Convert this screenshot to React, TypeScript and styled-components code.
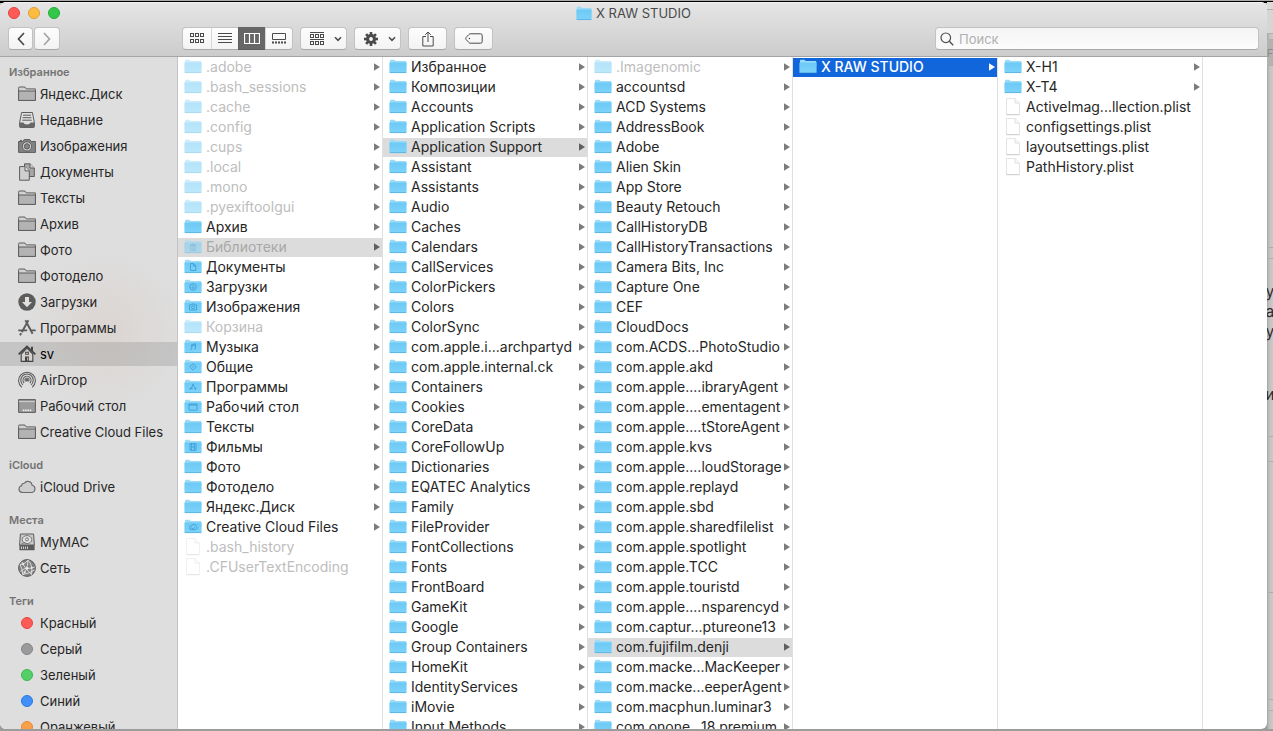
import React from "react";
import styled, { createGlobalStyle, css } from "styled-components";

const GlobalStyle = createGlobalStyle`
  * { box-sizing: border-box; }
  body {
    margin: 0;
    background: #b4b4b4;
    font-family: Inter, "Liberation Sans", sans-serif;
    color: #262626;
  }
  button { font: inherit; color: inherit; }
  ul { list-style: none; margin: 0; padding: 0; }
`;

/* ---------- desktop and window frame ---------- */

const Desktop = styled.div`
  display: flex;
  height: 100vh;
  padding: 1px 0 2px;
  overflow: hidden;
  border-top: 1px solid #a9aca9;
  background: linear-gradient(#000 0 2px, #c6c6c6 2px 60%, #9c9c9c);
`;

const Window = styled.main`
  flex: 1;
  min-width: 0;
  display: flex;
  flex-direction: column;
  overflow: hidden;
  border-radius: 6px;
  background: #fff;
`;

const Backdrop = styled.aside`
  flex: none;
  width: 6px;
  overflow: hidden;
  background: linear-gradient(90deg, #a4a4a4, #c0c0c0 2px, #cbcbcb);
`;

const Pane = styled.div<{ $h: number; $bg?: string; $pad?: number }>`
  height: ${(p) => p.$h}px;
  padding-top: ${(p) => p.$pad ?? 0}px;
  overflow: hidden;
  border-bottom: 1px solid #aeaeae;
  background: ${(p) => p.$bg ?? "none"};
`;

const Fragment = styled.div<{ $gap?: number; $faint?: boolean }>`
  display: flex;
  justify-content: center;
  margin-top: ${(p) => p.$gap ?? 0}px;
  font-size: ${(p) => (p.$faint ? 11 : 15)}px;
  line-height: 20px;
  color: ${(p) => (p.$faint ? "#8a8a8a" : "#2b2b2b")};
`;

/* ---------- toolbar ---------- */

const TitleArea = styled.header`
  flex: none;
  padding-bottom: 6px;
  border-bottom: 1px solid #a5a5a5;
  background: linear-gradient(#f2f2f2 0 1px, #e5e5e5 1px, #cccccc);
`;

const TitleRow = styled.div`
  display: grid;
  grid-template-columns: 1fr auto 1fr;
  align-items: center;
  height: 22px;
  margin-bottom: 3px;
  padding: 0 8px;
`;

const Lights = styled.div`
  display: flex;
  gap: 8px;
`;

const Light = styled.button<{ $fill: string; $edge: string }>`
  width: 12px;
  height: 12px;
  padding: 0;
  border: 1px solid ${(p) => p.$edge};
  border-radius: 50%;
  background: ${(p) => p.$fill};
`;

const Title = styled.h1`
  display: flex;
  align-items: center;
  gap: 4px;
  margin: 0;
  font-size: 13px;
  font-weight: 400;
  line-height: 20px;
  color: #4a4a4a;
`;

const Tools = styled.div`
  display: flex;
  gap: 7px;
  padding: 0 8px;
`;

const NavGroup = styled.nav`
  display: flex;
  gap: 1px;
  width: 167px;
`;

const ToolButton = styled.button<{ $w: number; $dim?: boolean; $menu?: boolean }>`
  display: flex;
  align-items: center;
  justify-content: center;
  gap: 10px;
  width: ${(p) => p.$w}px;
  height: 23px;
  padding: 0 0 0 ${(p) => (p.$menu ? 4 : 0)}px;
  border: 1px solid #c2c2c2;
  border-bottom-color: #a9a9a9;
  border-radius: 4px;
  background: linear-gradient(#fdfdfd, #f3f3f3);
  color: ${(p) => (p.$dim ? "#a5a5a5" : "#4a4a4a")};
`;

const Segments = styled.div`
  display: flex;
  height: 23px;
  border: 1px solid #c2c2c2;
  border-bottom-color: #a9a9a9;
  border-radius: 4px;
  background: linear-gradient(#fdfdfd, #f3f3f3);
`;

const Segment = styled.button<{ $on?: boolean }>`
  display: flex;
  align-items: center;
  justify-content: center;
  width: 27px;
  height: 21px;
  padding: 0;
  border: 0;
  background: none;
  color: #4a4a4a;
  &:first-child { width: 28px; }
  & + & { border-left: 1px solid #d6d6d6; }
  ${(p) =>
    p.$on &&
    css`
      background: #666;
      color: #fff;
      && { border-left-color: #5c5c5c; }
      box-shadow: 0 -1px #666, 0 1px #5c5c5c;
    `}
`;

const Search = styled.label`
  display: flex;
  align-items: center;
  gap: 5px;
  width: 324px;
  height: 23px;
  margin-left: auto;
  padding: 0 4px;
  border: 1px solid #c2c2c2;
  border-bottom-color: #a9a9a9;
  border-radius: 4px;
  background: linear-gradient(#f4f4f4, #fcfcfc);
  color: #4d4d4d;
`;

const SearchInput = styled.input`
  flex: 1;
  min-width: 0;
  padding: 0;
  border: 0;
  outline: 0;
  background: none;
  font: 13px/20px Inter, "Liberation Sans", sans-serif;
  &::placeholder { color: #b0b0b0; opacity: 1; }
`;

/* ---------- sidebar ---------- */

const Body = styled.div`
  flex: 1;
  min-height: 0;
  display: flex;
`;

const Sidebar = styled.nav`
  flex: none;
  width: 178px;
  padding-top: 5px;
  overflow: hidden;
  border-right: 1px solid #c3c3c3;
  background:
    radial-gradient(circle at 105px 275px, rgba(205, 170, 150, 0.18), rgba(205, 170, 150, 0) 80px),
    #dedede;
`;

const Group = styled.section`
  padding-bottom: 9px;
`;

const GroupTitle = styled.h2`
  margin: 0;
  padding-left: 9px;
  font-size: 11px;
  font-weight: 600;
  line-height: 20px;
  color: #737373;
`;

const Place = styled.a<{ $on?: boolean }>`
  display: flex;
  align-items: center;
  gap: 4px;
  height: 24px;
  margin-bottom: 2px;
  padding-left: 18px;
  font-size: 13px;
  line-height: 24px;
  white-space: nowrap;
  text-decoration: none;
  color: #262626;
  ${(p) => p.$on && css`background: rgba(110, 110, 110, 0.22); color: #000;`}
`;

const TagDot = styled.span<{ $fill: string; $edge: string }>`
  width: 12px;
  height: 12px;
  margin: 0 3px;
  border: 1px solid ${(p) => p.$edge};
  border-radius: 50%;
  background: ${(p) => p.$fill};
`;

/* ---------- columns ---------- */

const Column = styled.ul`
  flex: none;
  width: 205px;
  padding-top: 1px;
  overflow: hidden;
  border-right: 1px solid #e0e0e0;
`;

const Row = styled.button<{ $dim?: boolean; $on?: "grey" | "blue" }>`
  display: flex;
  align-items: center;
  gap: 4px;
  width: 100%;
  height: 19px;
  padding: 0 2px 2px 6px;
  border: 0;
  background: ${(p) => (p.$on === "blue" ? "#1166dc" : p.$on ? "#dcdcdc" : "none")};
  color: ${(p) => (p.$on === "blue" ? "#fff" : p.$dim ? (p.$on ? "#a8a8a8" : "#bdbdbd") : "#262626")};
  font-size: 14px;
  font-weight: ${(p) => (p.$on === "blue" ? 500 : 400)};
  line-height: 17px;
  text-align: left;
  white-space: nowrap;
`;

const RowItem = styled.li`
  height: 20px;
`;

const Name = styled.span`
  flex: 1;
  min-width: 0;
`;

const Faded = styled.span<{ $dim?: boolean }>`
  display: flex;
  flex: none;
  opacity: ${(p) => (p.$dim ? 0.5 : 1)};
`;

/* ---------- drawings ---------- */

const glyphs: Record<string, React.ReactNode> = {
  library: <path d="M6 7.5 9 5.8l3 1.7zM6.7 8.3v3.4M9 8.3v3.4M11.3 8.3v3.4M5.8 12.2h6.4" />,
  doc: <path d="M6.5 5.5h3l2.3 2.3v4.7H6.5zM9.3 5.7v2.3h2.4" />,
  down: <><circle cx="9" cy="9" r="3.3" /><path d="M9 7.2v3.2M7.5 9.2 9 10.7l1.5-1.5" /></>,
  camera: <><path d="M5.5 7h1.8l.7-1h2l.7 1h1.8v5h-7z" /><circle cx="9" cy="9.4" r="1.5" /></>,
  music: <path d="M7.7 11.3V6.6l3.8-.8v4.8M7.7 8l3.8-.8M6.3 11.5h1.2M10.1 10.8h1.2" />,
  shared: <path d="M9 5.7 12.2 9 9 12.2 5.8 9zM9 8.2v1.6" />,
  apps: <path d="M9.5 5.8 6.3 12M8.5 5.8l3.2 6.2M5.5 10.3h3.4M10.8 10.3h1.8" />,
  desk: <path d="M5 6h8v6.2H5zM5 7h8" />,
  film: <path d="M6 5.7h6v6.6H6zM7.6 5.7v6.6M10.4 5.7v6.6M7.6 9h2.8" />,
  cloud: <path d="M7.3 11.7a2 2 0 1 1 .4-4 2.6 2.6 0 0 1 4.8.9 1.8 1.8 0 0 1-1 3.1zM7 9.6l2.2 1.5 1.6-2" />,
};

function Folder({ glyph, width = 18 }: { glyph?: string; width?: number }) {
  return (
    <svg width={width} height="17" viewBox="0 0 18 17" preserveAspectRatio="none" aria-hidden="true">
      <defs>
        <linearGradient id="folder-front" x1="0" y1="0" x2="0" y2="1">
          <stop offset="0" stopColor="#6cc9f5" />
          <stop offset="1" stopColor="#7dd3fa" />
        </linearGradient>
      </defs>
      <path d="M1 2.8Q1 1.8 2 1.8H5.4L6.6 3.1H16.6Q17.3 3.1 17.3 4V8H1z" fill="#9adcf8" />
      <path d="M.4 4.6H17.6V14Q17.6 15 16.6 15H1.4Q.4 15 .4 14z" fill="url(#folder-front)" />
      <path d="M.8 14.6H17.2" stroke="#56addb" strokeWidth="0.8" />
      {glyph && (
        <g fill="none" stroke="#3497cf" strokeWidth="1" opacity="0.75">
          {glyphs[glyph]}
        </g>
      )}
    </svg>
  );
}

function File() {
  return (
    <svg width="18" height="19" viewBox="0 0 18 19" aria-hidden="true">
      <path d="M2.5 1.5H11L15.5 6V17.5H2.5z" fill="#fff" stroke="#e4e4e4" />
      <path d="M11 1.5V6H15.5" fill="#f8f8f8" stroke="#dfdfdf" />
      <path d="M2.5 17.7H15.5" stroke="#cdcdcd" />
    </svg>
  );
}

function Arrow({ color }: { color: string }) {
  return (
    <svg width="6" height="8" viewBox="0 0 6 8" aria-hidden="true">
      <path d="M0 .3 6 4 0 7.7z" fill={color} />
    </svg>
  );
}

const SIDE = "#5c5c5c";

const sideIcons: Record<string, React.ReactNode> = {
  folder: (
    <>
      <path d="M.6 3.4V15.4H17.4V3.9H8.3L6.9 2H1.4Q.6 2 .6 2.8z" fill="#d2d2d2" stroke={SIDE} />
      <path d="M.6 6H17.4V15.4H.6z" fill="#b3b3b3" stroke={SIDE} />
    </>
  ),
  recent: (
    <>
      <path d="M3.6 1.5H14.4L16.4 11.5V15.2Q16.4 16.5 15.2 16.5H2.8Q1.6 16.5 1.6 15.2V11.5z" fill="#e0e0e0" stroke={SIDE} />
      <path d="M1.6 11.6H5.4Q6 13.6 9 13.6T12.6 11.6H16.4V16.5H1.6z" fill="#686868" />
      <path d="M5 4.2H13M4.6 6.7H13.4M4.3 9.2H13.7" stroke={SIDE} />
    </>
  ),
  camera: (
    <>
      <path d="M.6 4.5H4.8L6.1 2.6H11.9L13.2 4.5H17.4V15.4H.6z" fill="#838383" stroke={SIDE} />
      <path d="M2 3.4H4" stroke={SIDE} />
      <circle cx="9" cy="9.4" r="4.6" fill="#dadada" stroke={SIDE} />
      <circle cx="9" cy="9.4" r="2.7" fill="#858585" stroke={SIDE} />
    </>
  ),
  docs: (
    <>
      <path d="M6.5.8H12L16.3 5V13.5H6.5z" fill="#a7a7a7" stroke={SIDE} />
      <path d="M12 .8V5H16.3" fill="#d9d9d9" stroke={SIDE} />
      <path d="M1.6 3.6H7L11.3 7.9V17.2H1.6z" fill="#cfcfcf" stroke={SIDE} />
      <path d="M7 3.6V7.9H11.3" fill="#e6e6e6" stroke={SIDE} />
    </>
  ),
  down: (
    <>
      <circle cx="9" cy="9" r="8.7" fill={SIDE} />
      <path d="M7 4H11V9H14L9 14.2 4 9H7z" fill="#e2dfdd" />
    </>
  ),
  apps: (
    <g fill="none" stroke={SIDE} strokeWidth="1.9">
      <path d="M10.4 1.2 3.8 13.2M7.4 1.2 14.6 14.8" />
      <path d="M.3 11.4H9.2M12.6 11.4H17.7" />
      <path d="M3.2 14.2 2 16.3" />
    </g>
  ),
  home: (
    <>
      <path d="M3.2 9V16.4H14.8V9L9 3.2z" fill="#d5d1cf" stroke="#444" strokeWidth="1.1" />
      <path d="M.6 9.4 9 1.4 17.4 9.4" fill="none" stroke="#444" strokeWidth="1.7" />
      <path d="M13 1.8H15V6.4L13 4.5z" fill="#444" />
      <path d="M7.2 6.8H10.8V9.8H7.2zM7 11.4H11V16.4H7z" fill="#444" />
      <path d="M8.3 7.8H9.7V8.9H8.3zM9.3 12.6H10.2V15.6H9.3z" fill="#ddd" />
    </>
  ),
  airdrop: (
    <g fill="none" stroke={SIDE} strokeWidth="1.1">
      <path d="M3.8 16.2A8.4 8.4 0 1 1 14.2 16.2" />
      <path d="M4.9 13.8A6.2 6.2 0 1 1 13.1 13.8" />
      <path d="M6.1 12A4 4 0 1 1 11.9 12" />
      <path d="M7.6 10.4A2 2 0 1 1 10.4 10.4" />
      <circle cx="9" cy="9.2" r=".7" fill={SIDE} />
    </g>
  ),
  desktop: (
    <>
      <path d="M.6 2.6H17.4V15.4H.6z" fill="#9a9a9a" stroke={SIDE} />
      <path d="M1 4.6H17" stroke="#d0d0d0" />
      <path d="M4.8 13.4H13.4" stroke="#eee" strokeWidth="1.8" strokeDasharray="1.6 .7" />
    </>
  ),
  cloud: (
    <path
      d="M4.2 14.5A3.4 3.4 0 0 1 3.6 7.8 2.7 2.7 0 0 1 6.3 5.2 4.3 4.3 0 0 1 14.1 7.3 3.7 3.7 0 0 1 14.2 14.5z"
      fill="#cecece"
      stroke="#6a6a6a"
      strokeWidth="1.1"
    />
  ),
  disk: (
    <>
      <path d="M2.4 1H15.6L16.4 12H1.6z" fill="#c9c9c9" stroke={SIDE} />
      <ellipse cx="9" cy="6.6" rx="4.8" ry="4" fill="#e2e2e2" stroke="#777" />
      <circle cx="9" cy="6.4" r="1.5" fill="none" stroke="#777" />
      <path d="M3.6 10.8 7.5 9.2" stroke="#777" />
      <path d="M1.4 12H16.6V17.2H1.4z" fill={SIDE} />
      <path d="M3 14.8H10.5" stroke="#ccc" strokeWidth="2.4" strokeDasharray="1 1" />
    </>
  ),
  network: (
    <>
      <circle cx="9" cy="9" r="8.4" fill="#808080" stroke={SIDE} />
      <g fill="none" stroke="#e4e4e4" strokeWidth=".9">
        <path d="M2 5.5Q8 5 10 1.2M2.5 12.5Q6 9 9 9.4T16.8 8M10 1.2Q15 6 13.5 15.6M4 3Q6 8 13.5 15.6M4.8 15.6Q9.5 12 10 1.2M4.8 15.6Q4.5 10 2 5.5M5 15.5Q11 14.5 16.5 11" />
      </g>
      <g fill="#eee">
        <circle cx="9.2" cy="9.3" r="1.2" />
        <circle cx="5" cy="5.2" r="1" />
        <circle cx="13.7" cy="8.8" r="1" />
        <circle cx="6.5" cy="13.2" r="1" />
      </g>
    </>
  ),
};

function SideIcon({ name }: { name: string }) {
  return (
    <svg width="18" height="18" viewBox="0 0 18 18" aria-hidden="true">
      {sideIcons[name]}
    </svg>
  );
}

function Chevron({ d }: { d: string }) {
  return (
    <svg width="8" height="14" viewBox="0 0 8 14" aria-hidden="true">
      <path d={d} fill="none" stroke="currentColor" strokeWidth="1.7" />
    </svg>
  );
}

function DownChevron() {
  return (
    <svg width="8" height="6" viewBox="0 0 8 6" aria-hidden="true">
      <path d="M1 1.2 4 4.3 7 1.2" fill="none" stroke="currentColor" strokeWidth="1.5" />
    </svg>
  );
}

function GridIcon() {
  return (
    <svg width="14" height="11" viewBox="0 0 14 11" fill="none" stroke="currentColor" aria-hidden="true">
      {[0.5, 5.5, 10.5].map((x) =>
        [0.5, 6.5].map((y) => <rect key={`${x}-${y}`} x={x} y={y} width="3" height="3" />)
      )}
    </svg>
  );
}

function ListIcon() {
  return (
    <svg width="14" height="11" viewBox="0 0 14 11" stroke="currentColor" aria-hidden="true">
      <path d="M0 .5H14M0 3.5H14M0 6.5H14M0 9.5H14" />
    </svg>
  );
}

function ColumnsIcon() {
  return (
    <svg width="16" height="11" viewBox="0 0 16 11" fill="none" stroke="currentColor" aria-hidden="true">
      <path d="M.5 .5H15.5V10.5H.5zM5.5 .5V10.5M10.5 .5V10.5" strokeWidth="1.2" />
    </svg>
  );
}

function GalleryIcon() {
  return (
    <svg width="14" height="11" viewBox="0 0 14 11" fill="none" stroke="currentColor" aria-hidden="true">
      <path d="M.5 .5H13.5V6.5H.5z" />
      <path d="M0 9.5H14" strokeWidth="2" strokeDasharray="2 1" />
    </svg>
  );
}

function ArrangeIcon() {
  return (
    <svg width="14" height="13" viewBox="0 0 14 13" fill="none" stroke="currentColor" aria-hidden="true">
      <path d="M0 .5H14M0 7.5H14" />
      {[0.5, 5.5, 10.5].map((x) =>
        [2.5, 9.5].map((y) => <rect key={`${x}-${y}`} x={x} y={y} width="3" height="3" />)
      )}
    </svg>
  );
}

function GearIcon() {
  return (
    <svg width="14" height="14" viewBox="0 0 14 14" aria-hidden="true">
      {[0, 45, 90, 135].map((a) => (
        <rect key={a} x="5.7" y="0" width="2.6" height="14" fill="currentColor" transform={`rotate(${a} 7 7)`} />
      ))}
      <circle cx="7" cy="7" r="5" fill="currentColor" />
      <circle cx="7" cy="7" r="1.9" fill="#f8f8f8" />
    </svg>
  );
}

function ShareIcon() {
  return (
    <svg width="12" height="16" viewBox="0 0 12 16" fill="none" stroke="currentColor" aria-hidden="true">
      <path d="M4 5.5H.8V15H11.2V5.5H8M6 11V1M3.2 3.8 6 1l2.8 2.8" />
    </svg>
  );
}

function TagIcon() {
  return (
    <svg width="18" height="11" viewBox="0 0 18 11" fill="none" stroke="currentColor" aria-hidden="true">
      <path d="M5.2.8H15.6Q17.2.8 17.2 2.4V8.6Q17.2 10.2 15.6 10.2H5.2Q4.6 10.2 4 9.6L1 6.4Q.4 5.5 1 4.6L4 1.4Q4.6.8 5.2.8z" />
      <circle cx="4.4" cy="5.5" r=".8" fill="currentColor" stroke="none" />
    </svg>
  );
}

function Magnifier() {
  return (
    <svg width="14" height="14" viewBox="0 0 14 14" fill="none" stroke="currentColor" aria-hidden="true">
      <circle cx="5.8" cy="5.8" r="4.8" strokeWidth="1.2" />
      <path d="M9.3 9.3 13.2 13.2" strokeWidth="1.4" />
    </svg>
  );
}

/* ---------- data ---------- */

type Entry = { name: string; dim?: boolean; file?: boolean; on?: "grey" | "blue"; glyph?: string };

const f = (...names: string[]): Entry[] => names.map((name) => ({ name }));
const hidden = (...names: string[]): Entry[] => names.map((name) => ({ name, dim: true }));
const files = (dim: boolean, ...names: string[]): Entry[] => names.map((name) => ({ name, dim, file: true }));

const columns: Entry[][] = [
  [
    ...hidden(".adobe", ".bash_sessions", ".cache", ".config", ".cups", ".local", ".mono", ".pyexiftoolgui"),
    { name: "Архив" },
    { name: "Библиотеки", dim: true, on: "grey", glyph: "library" },
    { name: "Документы", glyph: "doc" },
    { name: "Загрузки", glyph: "down" },
    { name: "Изображения", glyph: "camera" },
    { name: "Корзина", dim: true },
    { name: "Музыка", glyph: "music" },
    { name: "Общие", glyph: "shared" },
    { name: "Программы", glyph: "apps" },
    { name: "Рабочий стол", glyph: "desk" },
    { name: "Тексты" },
    { name: "Фильмы", glyph: "film" },
    ...f("Фото", "Фотодело", "Яндекс.Диск"),
    { name: "Creative Cloud Files", glyph: "cloud" },
    ...files(true, ".bash_history", ".CFUserTextEncoding"),
  ],
  [
    ...f("Избранное", "Композиции", "Accounts", "Application Scripts"),
    { name: "Application Support", on: "grey" },
    ...f(
      "Assistant", "Assistants", "Audio", "Caches", "Calendars", "CallServices", "ColorPickers",
      "Colors", "ColorSync", "com.apple.i...archpartyd", "com.apple.internal.ck", "Containers",
      "Cookies", "CoreData", "CoreFollowUp", "Dictionaries", "EQATEC Analytics", "Family",
      "FileProvider", "FontCollections", "Fonts", "FrontBoard", "GameKit", "Google",
      "Group Containers", "HomeKit", "IdentityServices", "iMovie", "Input Methods"
    ),
  ],
  [
    ...hidden(".Imagenomic"),
    ...f(
      "accountsd", "ACD Systems", "AddressBook", "Adobe", "Alien Skin", "App Store",
      "Beauty Retouch", "CallHistoryDB", "CallHistoryTransactions", "Camera Bits, Inc",
      "Capture One", "CEF", "CloudDocs", "com.ACDS...PhotoStudio", "com.apple.akd",
      "com.apple....ibraryAgent", "com.apple....ementagent", "com.apple....tStoreAgent",
      "com.apple.kvs", "com.apple....loudStorage", "com.apple.replayd", "com.apple.sbd",
      "com.apple.sharedfilelist", "com.apple.spotlight", "com.apple.TCC", "com.apple.touristd",
      "com.apple....nsparencyd", "com.captur...ptureone13"
    ),
    { name: "com.fujifilm.denji", on: "grey" },
    ...f("com.macke...MacKeeper", "com.macke...eeperAgent", "com.macphun.luminar3", "com.onone...18.premium"),
  ],
  [{ name: "X RAW STUDIO", on: "blue" }],
  [
    ...f("X-H1", "X-T4"),
    ...files(false, "ActiveImag...llection.plist", "configsettings.plist", "layoutsettings.plist", "PathHistory.plist"),
  ],
];

const places: { title: string; items: [string, string][] }[] = [
  {
    title: "Избранное",
    items: [
      ["Яндекс.Диск", "folder"],
      ["Недавние", "recent"],
      ["Изображения", "camera"],
      ["Документы", "docs"],
      ["Тексты", "folder"],
      ["Архив", "folder"],
      ["Фото", "folder"],
      ["Фотодело", "folder"],
      ["Загрузки", "down"],
      ["Программы", "apps"],
      ["sv", "home"],
      ["AirDrop", "airdrop"],
      ["Рабочий стол", "desktop"],
      ["Creative Cloud Files", "folder"],
    ],
  },
  { title: "iCloud", items: [["iCloud Drive", "cloud"]] },
  { title: "Места", items: [["MyMAC", "disk"], ["Сеть", "network"]] },
];

const tags = [
  { name: "Красный", fill: "#fc5b57", edge: "#ec4440" },
  { name: "Серый", fill: "#9a9a9d", edge: "#858588" },
  { name: "Зеленый", fill: "#54ce66", edge: "#3ab94e" },
  { name: "Синий", fill: "#418ff7", edge: "#2a78e6" },
  { name: "Оранжевый", fill: "#faa04a", edge: "#e98a30" },
];

function arrowColor(on?: string) {
  return on === "blue" ? "#fff" : on ? "#5f5f5f" : "#7b7b7b";
}

export default function App() {
  return (
    <>
      <GlobalStyle />
      <Desktop>
        <Window>
          <TitleArea>
            <TitleRow>
              <Lights>
                <Light $fill="#fc5b57" $edge="#e2443f" aria-label="Закрыть" />
                <Light $fill="#fdbc40" $edge="#e0a033" aria-label="Свернуть" />
                <Light $fill="#34c84a" $edge="#25ac38" aria-label="Развернуть" />
              </Lights>
              <Title>
                <Folder width={16} />
                X RAW STUDIO
              </Title>
            </TitleRow>
            <Tools>
              <NavGroup aria-label="Навигация">
                <ToolButton $w={25} aria-label="Назад"><Chevron d="M7 1 1.5 7 7 13" /></ToolButton>
                <ToolButton $w={26} $dim aria-label="Вперед"><Chevron d="M1 1 6.5 7 1 13" /></ToolButton>
              </NavGroup>
              <Segments role="group" aria-label="Вид">
                <Segment aria-label="Значки"><GridIcon /></Segment>
                <Segment aria-label="Список"><ListIcon /></Segment>
                <Segment $on aria-label="Колонки"><ColumnsIcon /></Segment>
                <Segment aria-label="Галерея"><GalleryIcon /></Segment>
              </Segments>
              <ToolButton $w={47} $menu aria-label="Группировка"><ArrangeIcon /><DownChevron /></ToolButton>
              <ToolButton $w={47} $menu aria-label="Действия"><GearIcon /><DownChevron /></ToolButton>
              <ToolButton $w={39} aria-label="Поделиться"><ShareIcon /></ToolButton>
              <ToolButton $w={39} aria-label="Теги"><TagIcon /></ToolButton>
              <Search>
                <Magnifier />
                <SearchInput type="search" placeholder="Поиск" aria-label="Поиск" />
              </Search>
            </Tools>
          </TitleArea>

          <Body>
            <Sidebar aria-label="Боковое меню">
              {places.map((g) => (
                <Group key={g.title}>
                  <GroupTitle>{g.title}</GroupTitle>
                  {g.items.map(([name, icon]) => (
                    <Place key={name} href="#" $on={name === "sv"}>
                      <SideIcon name={icon} />
                      {name}
                    </Place>
                  ))}
                </Group>
              ))}
              <Group>
                <GroupTitle>Теги</GroupTitle>
                {tags.map((t) => (
                  <Place key={t.name} href="#">
                    <TagDot $fill={t.fill} $edge={t.edge} />
                    {t.name}
                  </Place>
                ))}
              </Group>
            </Sidebar>

            {columns.map((entries, i) => (
              <Column key={i}>
                {entries.map((e) => (
                  <RowItem key={e.name}>
                    <Row $dim={e.dim} $on={e.on}>
                      <Faded $dim={e.dim}>{e.file ? <File /> : <Folder glyph={e.glyph} />}</Faded>
                      <Name>{e.name}</Name>
                      {!e.file && <Arrow color={arrowColor(e.on)} />}
                    </Row>
                  </RowItem>
                ))}
              </Column>
            ))}
          </Body>
        </Window>

        <Backdrop aria-hidden="true">
          <Pane $h={8} $bg="#dcdcdc" />
          <Pane $h={24} $bg="#d6d6d6" />
          <Pane $h={6} />
          <Pane $h={26} $bg="#b2b2b2" $pad={3}><Fragment $faint>F</Fragment></Pane>
          <Pane $h={182} />
          <Pane $h={11} />
          <Pane $h={178} $pad={23}>
            <Fragment>у</Fragment>
            <Fragment>а</Fragment>
            <Fragment>у</Fragment>
            <Fragment $gap={43}>и</Fragment>
          </Pane>
          <Pane $h={25} />
          <Pane $h={131} />
          <Pane $h={107} />
          <Pane $h={11} />
        </Backdrop>
      </Desktop>
    </>
  );
}
